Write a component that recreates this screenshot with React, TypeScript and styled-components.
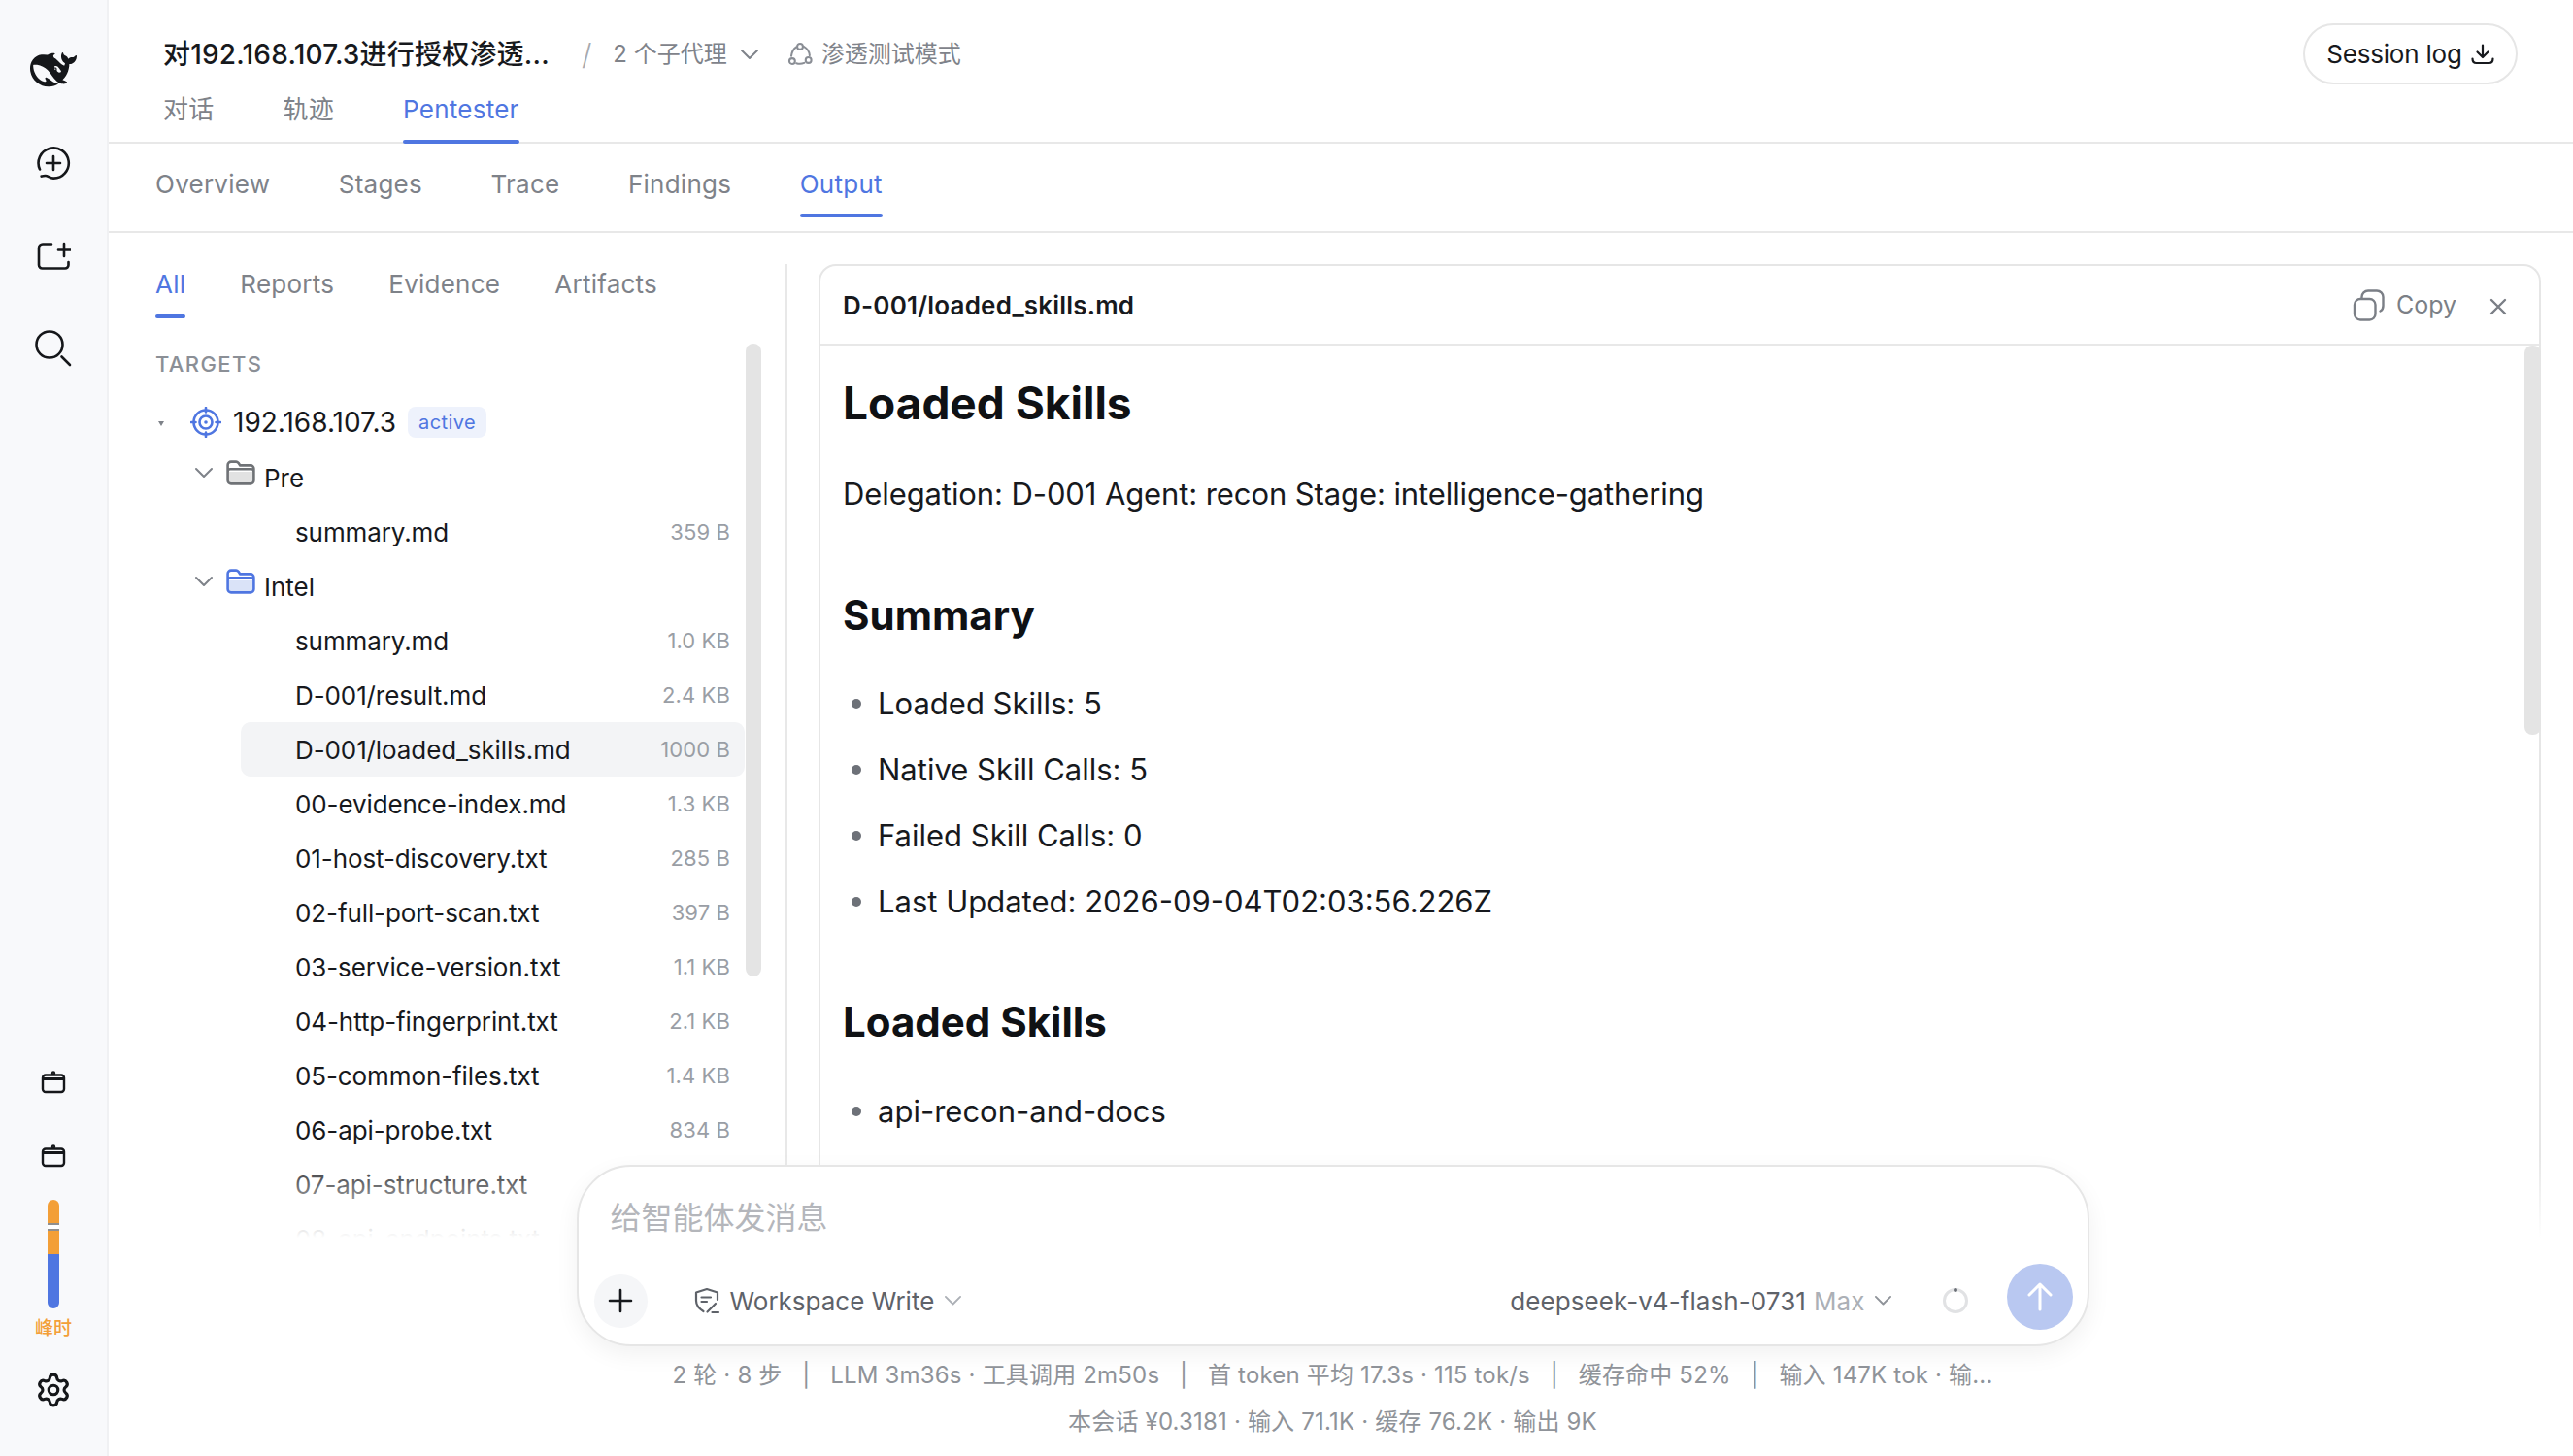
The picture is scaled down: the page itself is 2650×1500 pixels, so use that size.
import React from "react";
import styled, { createGlobalStyle } from "styled-components";
import { Settings } from "lucide-react";

const BLUE = "#4f76e1";
const FONT = `Inter, "Noto Sans CJK SC", sans-serif`;

const Global = createGlobalStyle`
  * { box-sizing: border-box; }
  html, body { margin: 0; padding: 0; background: #fff; }
  body { font-family: ${FONT}; color: #17191d; overflow: hidden; }
`;

const Page = styled.div`
  display: flex;
  width: 2650px;
  height: 1500px;
  overflow: hidden;
  background: #fff;
`;

/* sidebar */
const Sidebar = styled.aside`
  flex: 0 0 112px;
  display: flex;
  flex-direction: column;
  align-items: center;
  padding: 44px 0 40px;
  background: #f8f9fb;
  border-right: 2px solid #f0f1f3;
`;
const SideGroup = styled.div`
  display: flex;
  flex-direction: column;
  align-items: center;
  gap: 40px;
`;
const SideFoot = styled.div`
  margin-top: auto;
  display: flex;
  flex-direction: column;
  align-items: center;
`;
const SideButton = styled.div<{ $after?: number }>`
  width: 56px;
  height: 56px;
  display: flex;
  align-items: center;
  justify-content: center;
  color: #15171a;
  margin-bottom: ${(p) => p.$after ?? 0}px;
`;
const Meter = styled.div`
  position: relative;
  width: 12px;
  height: 112px;
  border-radius: 6px;
  overflow: hidden;
  display: flex;
  flex-direction: column;
`;
const MeterPart = styled.div<{ $color: string }>`
  flex: 1;
  background: ${(p) => p.$color};
`;
const MeterMark = styled.div`
  position: absolute;
  left: 0;
  right: 0;
  top: 24px;
  height: 8px;
  background: #fff;
  border-top: 2px solid #8f8f8f;
  border-bottom: 2px solid #8f8f8f;
`;
const PeakLabel = styled.div`
  margin: 9px 0 23px;
  font-size: 19px;
  line-height: 24px;
  font-weight: 500;
  color: #f39f37;
`;

/* main */
const Main = styled.main`
  flex: 1;
  min-width: 0;
  display: flex;
  flex-direction: column;
`;
const Header = styled.header`
  flex: 0 0 148px;
  display: flex;
  flex-direction: column;
  padding: 24px 57px 0 56px;
  border-bottom: 2px solid #e8e8e8;
`;
const TitleRow = styled.div`
  flex: 0 0 63px;
  display: flex;
  align-items: center;
`;
const Title = styled.h1`
  margin: 0;
  font-size: 28px;
  line-height: 40px;
  font-weight: 500;
  letter-spacing: 0.2px;
  color: #17191d;
`;
const Slash = styled.span`
  margin: 0 22px 0 33px;
  font-size: 30px;
  font-weight: 300;
  color: #a6a9ae;
`;
const Meta = styled.span`
  font-size: 24px;
  line-height: 36px;
  color: #7f838a;
`;
const ModeMeta = styled(Meta)`
  display: flex;
  align-items: center;
  gap: 9px;
  margin-left: 29px;
`;
const AgentMeta = styled(Meta)`
  display: flex;
  align-items: center;
  gap: 13px;
`;
const SessionButton = styled.button`
  margin-left: auto;
  height: 63px;
  width: 221px;
  display: flex;
  align-items: center;
  justify-content: center;
  gap: 9px;
  padding: 0;
  background: #fff;
  border: 2px solid #e6e6e6;
  border-radius: 32px;
  font: 400 26px ${FONT};
  letter-spacing: -0.2px;
  color: #17191d;
`;
const PrimaryTabs = styled.nav`
  display: flex;
  gap: 71px;
  margin: 6px 0 -2px;
`;
const SecondaryTabs = styled.nav`
  flex: 0 0 92px;
  display: flex;
  align-items: flex-start;
  gap: 70.5px;
  padding: 22px 0 0 48px;
  border-bottom: 2px solid #e8e8e8;
`;
const FilterTabs = styled.nav`
  display: flex;
  gap: 56px;
  padding-top: 1px;
`;
const Tab = styled.div<{ $active?: boolean; $below?: number }>`
  position: relative;
  font-size: 26px;
  line-height: 40px;
  letter-spacing: 0.25px;
  padding-bottom: ${(p) => p.$below ?? 15}px;
  color: ${(p) => (p.$active ? BLUE : "#7e8289")};
  &::after {
    content: "";
    display: ${(p) => (p.$active ? "block" : "none")};
    position: absolute;
    left: 0;
    right: 0;
    bottom: 0;
    height: 4px;
    border-radius: 2px;
    background: ${BLUE};
  }
`;

/* body */
const Body = styled.div`
  position: relative;
  flex: 1;
  min-height: 0;
  display: flex;
  padding-top: 32px;
  overflow: hidden;
`;
const Explorer = styled.section`
  position: relative;
  flex: 0 0 699px;
  padding-left: 48px;
  border-right: 2px solid #e8e8e8;
`;
const SectionLabel = styled.div`
  margin: 32px 0 16px;
  font-size: 22px;
  line-height: 30px;
  font-weight: 500;
  letter-spacing: 1.4px;
  color: #8b8f96;
`;
const Tree = styled.div`
  width: 607px;
`;
const RootRow = styled.div`
  height: 58px;
  display: flex;
  align-items: center;
`;
const Caret = styled.span`
  width: 0;
  height: 0;
  margin: 2px 27px 0 3px;
  border-left: 3px solid transparent;
  border-right: 3px solid transparent;
  border-top: 5px solid #7e8289;
`;
const RootName = styled.span`
  margin: 0 12px 0 12px;
  font-size: 28px;
  color: #17191d;
`;
const Badge = styled.span`
  padding: 0 11px;
  height: 32px;
  display: flex;
  align-items: center;
  border-radius: 8px;
  background: #eef2fc;
  font-size: 20px;
  letter-spacing: 0.4px;
  color: ${BLUE};
`;
const FolderRow = styled.div`
  height: 56px;
  display: flex;
  align-items: center;
  padding-left: 40px;
  font-size: 26px;
`;
const FolderGlyph = styled.svg`
  margin: -10px 9px 0 13px;
`;
const RowChevron = styled.span`
  display: flex;
  margin-top: -10px;
`;
const FileRow = styled.div<{ $selected?: boolean }>`
  height: 56px;
  margin-left: 88px;
  padding: 0 15px 0 56px;
  display: flex;
  align-items: center;
  justify-content: space-between;
  border-radius: 10px;
  font-size: 26px;
  letter-spacing: -0.1px;
  background: ${(p) => (p.$selected ? "#f3f4f6" : "transparent")};
`;
const FileSize = styled.span`
  font-size: 22px;
  letter-spacing: 0.1px;
  color: #9a9ea5;
`;
const Scrollbar = styled.div`
  position: absolute;
  left: 656px;
  top: 82px;
  width: 16px;
  height: 652px;
  border-radius: 8px;
  background: #e4e4e4;
`;
const Viewer = styled.section`
  position: relative;
  flex: 0 0 1774px;
  margin-left: 32px;
  display: flex;
  flex-direction: column;
  border: 2px solid #e6e6e6;
  border-bottom: none;
  border-radius: 18px 18px 0 0;
`;
const ViewerHead = styled.div`
  flex: 0 0 82px;
  display: flex;
  align-items: center;
  padding: 0 33px 0 23px;
  border-bottom: 2px solid #e8e8e8;
`;
const ViewerTitle = styled.div`
  font-size: 26px;
  font-weight: 600;
  letter-spacing: 0.2px;
  color: #17191d;
`;
const CopyButton = styled.div`
  margin-left: auto;
  display: flex;
  align-items: center;
  gap: 12px;
  font-size: 25px;
  color: #7b7f86;
`;
const CloseGlyph = styled.svg`
  margin: 4px 0 0 34px;
  color: #7b7f86;
`;
const ViewerScroll = styled.div`
  position: absolute;
  right: -2px;
  top: 82px;
  width: 17px;
  height: 401px;
  border-radius: 8px;
  background: #e4e4e4;
`;
const Doc = styled.article`
  padding: 29px 23px 0;
  color: #17191d;
`;
const H1 = styled.h2`
  margin: 0;
  font-size: 46px;
  line-height: 60px;
  font-weight: 700;
  color: #0f1114;
`;
const H2 = styled.h3<{ $top: number }>`
  margin: ${(p) => p.$top}px 0 0;
  font-size: 42px;
  line-height: 54px;
  font-weight: 700;
  color: #0f1114;
`;
const Para = styled.p`
  margin: 38px 0 0;
  font-size: 31px;
  line-height: 52px;
  letter-spacing: -0.1px;
`;
const List = styled.ul<{ $top: number }>`
  margin: ${(p) => p.$top}px 0 0;
  padding: 0;
  list-style: none;
`;
const Item = styled.li`
  height: 68px;
  display: flex;
  align-items: center;
  font-size: 31px;
  &::before {
    content: "";
    width: 10px;
    height: 10px;
    margin: 2px 17px 0 9px;
    border-radius: 50%;
    background: #6d7178;
  }
`;

/* composer */
const Dock = styled.div`
  position: absolute;
  left: 0;
  right: 0;
  bottom: 0;
  height: 310px;
  padding: 10px 17px 0 0;
  display: flex;
  flex-direction: column;
  align-items: center;
  background: linear-gradient(to bottom, rgba(255, 255, 255, 0), #fff 85px);
`;
const Composer = styled.div`
  flex: 0 0 187px;
  width: 1558px;
  display: flex;
  flex-direction: column;
  padding: 31px 15px 7px 16px;
  background: #fff;
  border: 2px solid #e6e6e6;
  border-radius: 56px;
  box-shadow: 0 8px 24px rgba(0, 0, 0, 0.06);
`;
const Placeholder = styled.div`
  padding-left: 17px;
  font-size: 32px;
  line-height: 44px;
  color: #b4b6bb;
`;
const ComposerBar = styled.div`
  margin-top: auto;
  height: 76px;
  display: flex;
  align-items: center;
`;
const PlusButton = styled.div`
  width: 55px;
  height: 55px;
  display: flex;
  align-items: center;
  justify-content: center;
  border-radius: 50%;
  background: #f5f6f8;
  color: #17191d;
`;
const ModeSelect = styled.div`
  margin-left: 48px;
  display: flex;
  align-items: center;
  gap: 10px;
  font-size: 26px;
  color: #5e6269;
`;
const ModelSelect = styled.div`
  margin-left: auto;
  display: flex;
  align-items: center;
  gap: 9px;
  font-size: 26px;
  letter-spacing: 0.08px;
  color: #5e6269;
`;
const ModelHint = styled.span`
  color: #acb0b6;
  margin-left: -1px;
`;
const SpinnerGlyph = styled.svg`
  margin: 0 39px 0 51px;
`;
const SendButton = styled.div`
  width: 68px;
  height: 68px;
  margin-bottom: 8px;
  display: flex;
  align-items: center;
  justify-content: center;
  border-radius: 50%;
  background: #b9c8f1;
  color: #fff;
`;
const StatusLine = styled.div<{ $top: number }>`
  margin-top: ${(p) => p.$top}px;
  font-size: 24px;
  line-height: 32px;
  letter-spacing: 0.18px;
  color: #8f9399;
  white-space: pre;
`;

/* glyphs */
const Chevron = ({ w, color }: { w: number; color: string }) => (
  <svg width={w} height={w * 0.6} viewBox="0 0 20 12" fill="none" stroke={color} strokeWidth="2" strokeLinecap="round" strokeLinejoin="round">
    <path d="M2 2l8 8 8-8" />
  </svg>
);

const Folder = ({ color, fill }: { color: string; fill: string }) => (
  <FolderGlyph width="30" height="26" viewBox="0 0 30 26" fill="none" stroke={color} strokeWidth="2.6" strokeLinejoin="round" strokeLinecap="round">
    <path d="M1.6 12h26.8v9a3.4 3.4 0 0 1-3.4 3.4H5A3.4 3.4 0 0 1 1.6 21z" fill={fill} stroke="none" />
    <path d="M1.6 21V5A3.4 3.4 0 0 1 5 1.6h5.2c1 0 1.7.5 2.3 1.2l1.8 2.6H25A3.4 3.4 0 0 1 28.4 8.8V21a3.4 3.4 0 0 1-3.4 3.4H5A3.4 3.4 0 0 1 1.6 21zM1.6 12c0-1.6 1-2.7 2.6-2.7h21.6c1.6 0 2.6 1.1 2.6 2.7" />
  </FolderGlyph>
);

const files: { name: string; size?: string; selected?: boolean }[] = [
  { name: "summary.md", size: "1.0 KB" },
  { name: "D-001/result.md", size: "2.4 KB" },
  { name: "D-001/loaded_skills.md", size: "1000 B", selected: true },
  { name: "00-evidence-index.md", size: "1.3 KB" },
  { name: "01-host-discovery.txt", size: "285 B" },
  { name: "02-full-port-scan.txt", size: "397 B" },
  { name: "03-service-version.txt", size: "1.1 KB" },
  { name: "04-http-fingerprint.txt", size: "2.1 KB" },
  { name: "05-common-files.txt", size: "1.4 KB" },
  { name: "06-api-probe.txt", size: "834 B" },
  { name: "07-api-structure.txt" },
  { name: "08-api-endpoints.txt" },
];

export default function App() {
  return (
    <Page>
      <Global />
      <Sidebar>
        <SideGroup>
          <SideButton>
            <svg width="48" height="48" viewBox="0 0 24 24" fill="currentColor" fillRule="evenodd">
              <path d="M23.748 4.482c-.254-.124-.364.113-.512.234-.051.039-.094.09-.137.136-.372.397-.806.657-1.373.626-.829-.046-1.537.214-2.163.848-.133-.782-.575-1.248-1.247-1.548-.352-.156-.708-.311-.955-.65-.172-.241-.219-.51-.305-.774-.055-.16-.11-.323-.293-.35-.2-.031-.278.136-.356.276-.313.572-.434 1.202-.422 1.84.027 1.436.633 2.58 1.838 3.393.137.093.172.187.129.323-.082.28-.18.552-.266.833-.055.179-.137.217-.329.14a5.526 5.526 0 01-1.736-1.18c-.857-.828-1.631-1.742-2.597-2.458a11.365 11.365 0 00-.689-.471c-.985-.957.13-1.743.388-1.836.27-.098.093-.432-.779-.428-.872.004-1.67.295-2.687.684a3.055 3.055 0 01-.465.137 9.597 9.597 0 00-2.883-.102c-1.885.21-3.39 1.102-4.497 2.623C.082 8.606-.231 10.684.152 12.85c.403 2.284 1.569 4.175 3.36 5.653 1.858 1.533 3.997 2.284 6.438 2.14 1.482-.085 3.133-.284 4.994-1.86.47.234.962.327 1.78.397.63.059 1.236-.03 1.705-.128.735-.156.684-.837.419-.961-2.155-1.004-1.682-.595-2.113-.926 1.096-1.296 2.746-2.642 3.392-7.003.05-.347.007-.565 0-.845-.004-.17.035-.237.23-.256a4.173 4.173 0 001.545-.475c1.396-.763 1.96-2.015 2.093-3.517.02-.23-.004-.467-.247-.588zM11.581 18c-2.089-1.642-3.102-2.183-3.52-2.16-.392.024-.321.471-.235.763.09.288.207.486.371.739.114.167.192.416-.113.603-.673.416-1.842-.14-1.897-.167-1.361-.802-2.5-1.86-3.301-3.307-.774-1.393-1.224-2.887-1.298-4.482-.02-.386.093-.522.477-.592a4.696 4.696 0 011.529-.039c2.132.312 3.946 1.265 5.468 2.774.868.86 1.525 1.887 2.202 2.891.72 1.066 1.494 2.082 2.48 2.914.348.292.625.514.891.677-.802.09-2.14.11-3.054-.614zm1-6.44a.306.306 0 01.415-.287.302.302 0 01.2.288.306.306 0 01-.31.307.303.303 0 01-.304-.308zm3.11 1.596c-.2.081-.399.151-.59.16a1.245 1.245 0 01-.798-.254c-.274-.23-.47-.358-.552-.758a1.73 1.73 0 01.016-.588c.07-.327-.008-.537-.239-.727-.187-.156-.426-.199-.688-.199a.559.559 0 01-.254-.078c-.11-.054-.2-.19-.114-.358.028-.054.16-.186.192-.21.356-.202.767-.136 1.146.016.352.144.618.408 1.001.782.391.451.462.576.685.914.176.265.336.537.445.848.067.195-.019.354-.25.452z" />
            </svg>
          </SideButton>
          <SideButton>
            <svg width="36" height="36" viewBox="0 0 36 36" fill="none" stroke="currentColor" strokeWidth="2.6" strokeLinecap="round" strokeLinejoin="round">
              <path d="M4 24.5A15.6 15.6 0 1 1 18 33.6c-3.6 0-5.6-2.6-8.2-2.6-1.6 0-3 .6-4.2.6" />
              <path d="M18 11v14M11 18h14" />
            </svg>
          </SideButton>
          <SideButton>
            <svg width="36" height="30" viewBox="0 0 36 30" fill="none" stroke="currentColor" strokeWidth="2.6" strokeLinecap="round" strokeLinejoin="round">
              <path d="M16 2.5H7a4 4 0 0 0-4 4v17.5a3.5 3.5 0 0 0 3.5 3.5H30a3.5 3.5 0 0 0 3.5-3.5v-3" />
              <path d="M29 2v13M23 8.500h12.500" />
            </svg>
          </SideButton>
          <SideButton>
            <svg width="40" height="40" viewBox="0 0 40 40" fill="none" stroke="currentColor" strokeWidth="2.6" strokeLinecap="round">
              <circle cx="16" cy="15" r="13.500" />
              <path d="M28.500 27.500l8.500 8.500" />
            </svg>
          </SideButton>
        </SideGroup>
        <SideFoot>
          <SideButton $after={20}>
            <svg width="26" height="24" viewBox="0 0 26 24" fill="none" stroke="currentColor" strokeWidth="2.4" strokeLinejoin="round" strokeLinecap="round">
              <rect x="2" y="4.500" width="22" height="17.500" rx="3" />
              <path d="M2.500 8.500h21" strokeWidth="3" />
              <circle cx="13" cy="2.500" r="1" />
            </svg>
          </SideButton>
          <SideButton $after={17}>
            <svg width="26" height="24" viewBox="0 0 26 24" fill="none" stroke="currentColor" strokeWidth="2.4" strokeLinejoin="round" strokeLinecap="round">
              <rect x="2" y="4.500" width="22" height="17.500" rx="3" />
              <path d="M2.500 8.500h21" strokeWidth="3" />
              <circle cx="13" cy="2.500" r="1" />
            </svg>
          </SideButton>
          <Meter>
            <MeterPart $color="#f39f37" />
            <MeterPart $color={BLUE} />
            <MeterMark />
          </Meter>
          <PeakLabel>峰时</PeakLabel>
          <SideButton>
            <Settings size={38} strokeWidth={2} />
          </SideButton>
        </SideFoot>
      </Sidebar>

      <Main>
        <Header>
          <TitleRow>
            <Title>对192.168.107.3进行授权渗透...</Title>
            <Slash>/</Slash>
            <AgentMeta>
              2 个子代理
              <Chevron w={20} color="#7f838a" />
            </AgentMeta>
            <ModeMeta>
              <svg width="26" height="26" viewBox="0 0 24 24" fill="none" stroke="#8a8e95" strokeWidth="1.9" strokeLinecap="round">
                <circle cx="12" cy="4.500" r="2.700" />
                <circle cx="4.500" cy="18.500" r="2.700" />
                <circle cx="20" cy="17.500" r="2.700" />
                <path d="M8.500 5c-2.500 1.700-4.300 4.500-4.800 8.500M15.500 4.500c3.200 1.800 5.300 4.800 5.600 8.500M8.500 20.500c1.900.6 5 .7 7.500-.3" />
              </svg>
              渗透测试模式
            </ModeMeta>
            <SessionButton>
              Session log
              <svg width="24" height="22" viewBox="0 0 24 22" fill="none" stroke="currentColor" strokeWidth="2.200" strokeLinecap="round" strokeLinejoin="round">
                <path d="M12 1.500v12M6.500 8.500l5.500 5.500 5.500-5.500" />
                <path d="M1.500 15.500c0 2.800 1.500 4.500 4 4.500h13c2.500 0 4-1.700 4-4.500" />
              </svg>
            </SessionButton>
          </TitleRow>
          <PrimaryTabs>
            <Tab>对话</Tab>
            <Tab>轨迹</Tab>
            <Tab $active>Pentester</Tab>
          </PrimaryTabs>
        </Header>

        <SecondaryTabs>
          <Tab $below={14}>Overview</Tab>
          <Tab $below={14}>Stages</Tab>
          <Tab $below={14}>Trace</Tab>
          <Tab $below={14}>Findings</Tab>
          <Tab $active $below={14}>Output</Tab>
        </SecondaryTabs>

        <Body>
          <Explorer>
            <FilterTabs>
              <Tab $active>All</Tab>
              <Tab>Reports</Tab>
              <Tab>Evidence</Tab>
              <Tab>Artifacts</Tab>
            </FilterTabs>
            <SectionLabel>TARGETS</SectionLabel>
            <Tree>
              <RootRow>
                <Caret />
                <svg width="32" height="32" viewBox="0 0 32 32" fill="none" stroke={BLUE} strokeWidth="2.600">
                  <circle cx="16" cy="16" r="12.500" />
                  <circle cx="16" cy="16" r="6.500" />
                  <circle cx="16" cy="16" r="1.800" fill={BLUE} stroke="none" />
                  <path d="M16 1v4.500M16 26.500V31M1 16h4.500M26.500 16H31" strokeLinecap="round" />
                </svg>
                <RootName>192.168.107.3</RootName>
                <Badge>active</Badge>
              </RootRow>
              <FolderRow>
                <RowChevron><Chevron w={20} color="#7e8289" /></RowChevron>
                <Folder color="#6f7276" fill="#e2e2e2" />
                Pre
              </FolderRow>
              <FileRow>
                summary.md
                <FileSize>359 B</FileSize>
              </FileRow>
              <FolderRow>
                <RowChevron><Chevron w={20} color="#7e8289" /></RowChevron>
                <Folder color={BLUE} fill="#dae3f8" />
                Intel
              </FolderRow>
              {files.map((file) => (
                <FileRow key={file.name} $selected={file.selected}>
                  {file.name}
                  {file.size && <FileSize>{file.size}</FileSize>}
                </FileRow>
              ))}
            </Tree>
            <Scrollbar />
          </Explorer>

          <Viewer>
            <ViewerHead>
              <ViewerTitle>D-001/loaded_skills.md</ViewerTitle>
              <CopyButton>
                <svg width="33" height="33" viewBox="0 0 33 33" fill="none" stroke="currentColor" strokeWidth="2.400" strokeLinecap="round">
                  <rect x="2" y="10" width="21.500" height="21.500" rx="6" />
                  <path d="M9.500 9.500V8a6.500 6.500 0 0 1 6.500-6.500h9A6.500 6.500 0 0 1 31.500 8v9c0 2.500-1 4.500-3 5.500" />
                </svg>
                Copy
              </CopyButton>
              <CloseGlyph width="18" height="18" viewBox="0 0 18 18" fill="none" stroke="currentColor" strokeWidth="2.400" strokeLinecap="round">
                <path d="M2 2l14 14M16 2L2 16" />
              </CloseGlyph>
            </ViewerHead>
            <ViewerScroll />
            <Doc>
              <H1>Loaded Skills</H1>
              <Para>Delegation: D-001 Agent: recon Stage: intelligence-gathering</Para>
              <H2 $top={72}>Summary</H2>
              <List $top={29}>
                <Item>Loaded Skills: 5</Item>
                <Item>Native Skill Calls: 5</Item>
                <Item>Failed Skill Calls: 0</Item>
                <Item>Last Updated: 2026-09-04T02:03:56.226Z</Item>
              </List>
              <H2 $top={64}>Loaded Skills</H2>
              <List $top={30}>
                <Item>api-recon-and-docs</Item>
              </List>
            </Doc>
          </Viewer>

          <Dock>
            <Composer>
              <Placeholder>给智能体发消息</Placeholder>
              <ComposerBar>
                <PlusButton>
                  <svg width="26" height="26" viewBox="0 0 26 26" fill="none" stroke="currentColor" strokeWidth="2.600" strokeLinecap="round">
                    <path d="M13 2v22M2 13h22" />
                  </svg>
                </PlusButton>
                <ModeSelect>
                  <svg width="27" height="28" viewBox="0 0 27 28" fill="none" stroke="currentColor" strokeWidth="2.200" strokeLinecap="round" strokeLinejoin="round">
                    <path d="M9.500 25C4.500 22 2 18.500 2 14V5.500L13 2l11 3.500V13" />
                    <path d="M7.500 10.500H17M7.500 15H13M13.500 25.500l8.500-8.500M18.500 26H25" />
                  </svg>
                  Workspace Write
                  <Chevron w={19} color="#acb0b6" />
                </ModeSelect>
                <ModelSelect>
                  <span>deepseek-v4-flash-0731</span>
                  <ModelHint>Max</ModelHint>
                  <Chevron w={19} color="#8f9399" />
                </ModelSelect>
                <SpinnerGlyph width="28" height="28" viewBox="0 0 28 28" fill="none">
                  <circle cx="14" cy="14" r="11.500" stroke="#e1e2e4" strokeWidth="3" />
                  <circle cx="14" cy="3" r="2" fill="#6b6f76" />
                </SpinnerGlyph>
                <SendButton>
                  <svg width="30" height="30" viewBox="0 0 30 30" fill="none" stroke="currentColor" strokeWidth="3" strokeLinecap="round" strokeLinejoin="round">
                    <path d="M15 28V2M4 13L15 2l11 11" />
                  </svg>
                </SendButton>
              </ComposerBar>
            </Composer>
            <StatusLine $top={14}>{"2 轮 · 8 步   |   LLM 3m36s · 工具调用 2m50s   |   首 token 平均 17.3s · 115 tok/s   |   缓存命中 52%   |   输入 147K tok · 输..."}</StatusLine>
            <StatusLine $top={16}>本会话 ¥0.3181 · 输入 71.1K · 缓存 76.2K · 输出 9K</StatusLine>
          </Dock>
        </Body>
      </Main>
    </Page>
  );
}
